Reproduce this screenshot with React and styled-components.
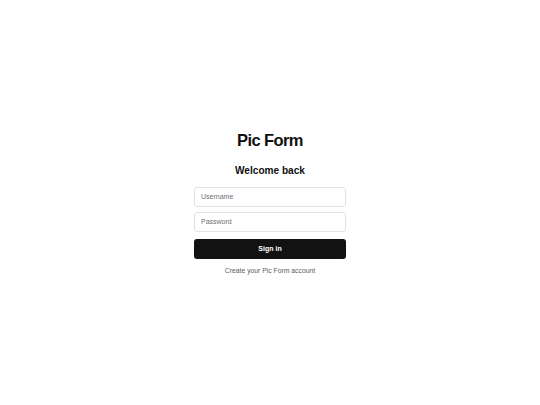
import styled, { createGlobalStyle } from 'styled-components';

const GlobalStyle = createGlobalStyle`
  html, body {
    margin: 0;
    padding: 0;
    background: #ffffff;
    font-family: "Liberation Sans", Arial, sans-serif;
  }
  * {
    box-sizing: border-box;
  }
`;

const Page = styled.div`
  display: flex;
  align-items: center;
  justify-content: center;
  width: 100%;
  min-height: 100vh;
`;

const Card = styled.div`
  display: flex;
  flex-direction: column;
  align-items: center;
  width: 152px;
`;

const Logo = styled.div`
  font-size: 16.5px;
  line-height: 20px;
  font-weight: 700;
  letter-spacing: -0.6px;
  color: #111111;
`;

const Heading = styled.div`
  margin-top: 14px;
  font-size: 10.1px;
  line-height: 14px;
  font-weight: 700;
  color: #111111;
`;

const Form = styled.form`
  display: flex;
  flex-direction: column;
  gap: 5px;
  width: 100%;
  margin-top: 9px;
`;

const Input = styled.input`
  width: 100%;
  height: 20px;
  padding: 0 6px;
  border: 1px solid #e2e2e2;
  border-radius: 3px;
  background: #ffffff;
  font-family: inherit;
  font-size: 7px;
  color: #222222;
  outline: none;
  &::placeholder {
    color: #6f6f6f;
  }
`;

const Button = styled.button`
  width: 100%;
  height: 20px;
  margin-top: 2px;
  border: none;
  border-radius: 3px;
  background: #121212;
  color: #ffffff;
  font-family: inherit;
  font-size: 7px;
  font-weight: 700;
  cursor: pointer;
`;

const SignupLink = styled.a`
  margin-top: 7px;
  font-size: 6.8px;
  line-height: 10px;
  color: #5c5c5c;
  text-decoration: none;
  cursor: pointer;
`;

const App = () => {
  return (
    <>
      <GlobalStyle />
      <Page>
        <Card>
          <Logo>Pic Form</Logo>
          <Heading>Welcome back</Heading>
          <Form onSubmit={(e) => e.preventDefault()}>
            <Input type='text' placeholder='Username' />
            <Input type='password' placeholder='Password' />
            <Button type='submit'>Sign in</Button>
          </Form>
          <SignupLink>Create your Pic Form account</SignupLink>
        </Card>
      </Page>
    </>
  );
};

export default App;
